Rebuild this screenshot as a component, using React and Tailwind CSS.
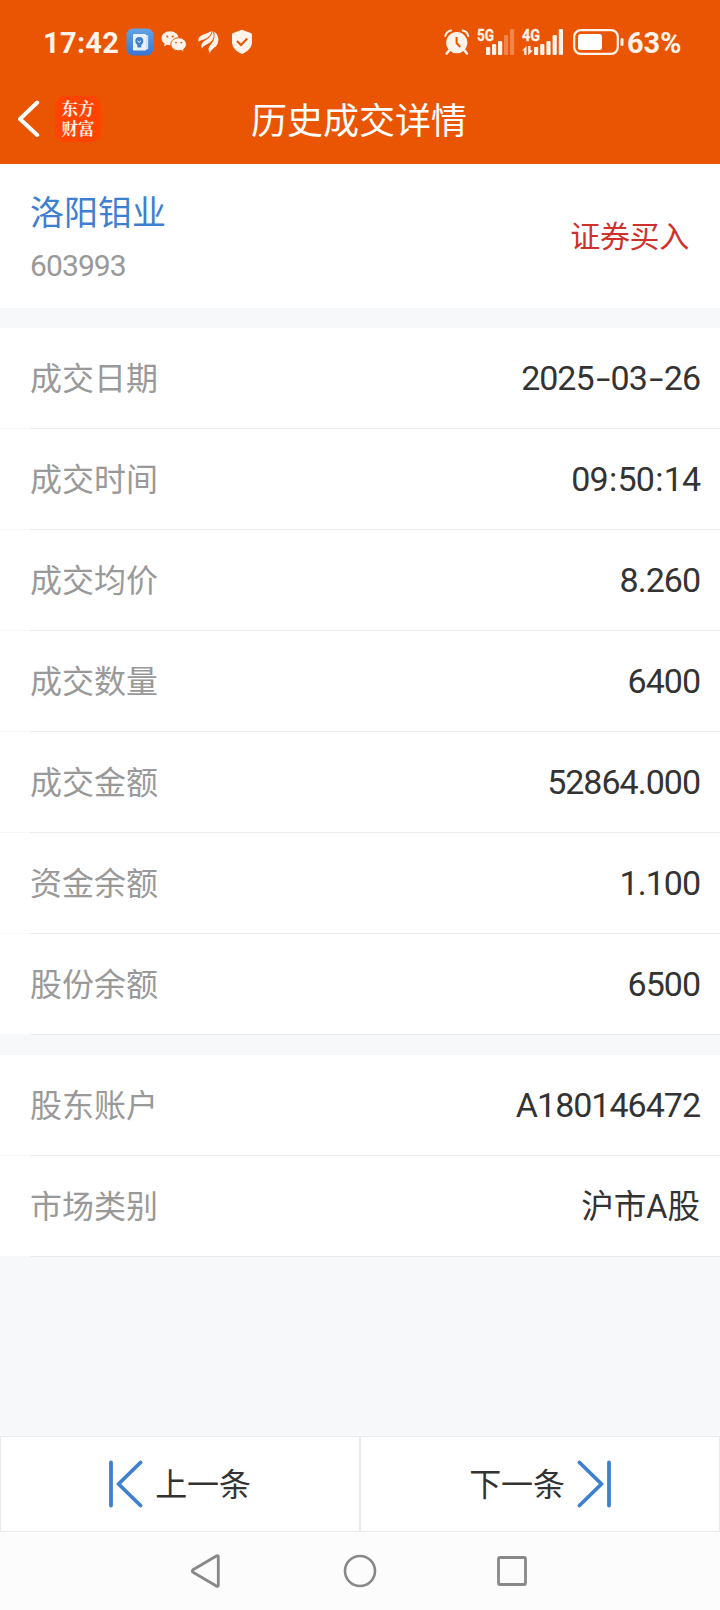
const tradeRows = [
  { label: "成交日期", value: "2025-03-26" },
  { label: "成交时间", value: "09:50:14" },
  { label: "成交均价", value: "8.260" },
  { label: "成交数量", value: "6400" },
  { label: "成交金额", value: "52864.000" },
  { label: "资金余额", value: "1.100" },
  { label: "股份余额", value: "6500" },
];

const accountRows = [
  { label: "股东账户", value: "A180146472" },
  { label: "市场类别", value: "沪市A股", cjk: true },
];

const NotesIcon = () => (
  <svg className="ml-[7px] w-7 h-7" viewBox="0 0 28 28">
    <defs>
      <linearGradient id="notes" x1="0" y1="0" x2="0" y2="1">
        <stop offset="0" stopColor="#5fa3e6" />
        <stop offset="1" stopColor="#3b74cf" />
      </linearGradient>
    </defs>
    <rect x="0.5" y="0.5" width="27" height="27" rx="6.5" fill="url(#notes)" />
    <rect x="19" y="7" width="3.2" height="14.5" rx="1.2" fill="#cfe2fa" />
    <rect x="7" y="6" width="13" height="16.5" rx="1.2" fill="#e6f1fd" />
    <circle cx="13.3" cy="13" r="4" fill="#3f7fd0" />
    <rect x="11.3" y="16" width="4" height="3.4" rx="0.6" fill="#3f7fd0" />
    <path d="M11.5 12.8l1.8 1.6 1.8-1.6" stroke="#fff" strokeWidth="1" fill="none" />
  </svg>
);

const WechatIcon = () => (
  <svg className="ml-[7px] w-[26px] h-6" viewBox="0 0 26 24">
    <path
      fill="#fff3ea"
      d="M9 1.2C4.3 1.2.6 4.3.6 8.2c0 2.2 1.2 4.1 3.1 5.400L3 16.200l3-1.500c1 .3 2 .5 3 .5 4.800 0 8.500-3.100 8.500-7S13.800 1.200 9 1.200z"
    />
    <path
      fill="#fff3ea"
      stroke="#ea5504"
      strokeWidth="1"
      d="M17.600 7.800c-4.300 0-7.800 2.900-7.800 6.500s3.500 6.500 7.800 6.500c.9 0 1.800-.1 2.600-.4l2.900 1.700-.6-2.800c1.800-1.200 2.900-3 2.900-5 0-3.600-3.500-6.500-7.800-6.500z"
    />
    <circle cx="6.3" cy="6.5" r="1.1" fill="#ea5504" />
    <circle cx="11.7" cy="6.5" r="1.1" fill="#ea5504" />
    <circle cx="15" cy="12.6" r="0.9" fill="#ea5504" />
    <circle cx="20.2" cy="12.6" r="0.9" fill="#ea5504" />
  </svg>
);

const FeatherIcon = () => (
  <svg className="ml-[11px] w-[21px] h-6" viewBox="0 0 21 24" fill="#fff3ea">
    <path d="M.5 11.800C-.8 5.500 5.500 4.800 9 3.200c2-.9 3.500-1.600 5-1.900C12.500 5.500 10 8 6.500 9.200 4 10 2 10.300.5 11.800z" />
    <path d="M3.800 18.500C1.500 11.500 8.500 10.800 11.500 7.200 13.200 5.200 14 3.500 14.800 1c2 5.500.5 9-3 11.500-3 2.200-6 2.800-8 6z" />
    <path d="M11.800 23.300C8.200 17.500 13.500 14.800 15.500 10.500 16.700 7.800 16.700 4.500 16.200 1.500c4.500 3.500 5.200 9 3 13-1.800 3.300-6 4.300-7.400 8.800z" />
  </svg>
);

const ShieldIcon = () => (
  <svg className="ml-3 w-[22px] h-[26px]" viewBox="0 0 22 26">
    <path
      fill="#fff3ea"
      d="M11 .8l8.700 3.100c.8.300 1.300 1 1.300 1.800V13c0 5.500-4 9.300-10 12C5 22.300 1 18.500 1 13V5.700c0-.8.5-1.500 1.300-1.800z"
    />
    <path d="M6 12l4 4 6.200-6.500" stroke="#ea5504" strokeWidth="2" fill="none" />
  </svg>
);

const AlarmIcon = () => (
  <svg className="w-[26px] h-[26px]" viewBox="0 0 26 26" fill="none" stroke="#fff3ea">
    <circle cx="12.8" cy="13.7" r="10.6" fill="#fff3ea" stroke="none" />
    <path d="M1.300 7C2 4 4 2 7 1.400M24.300 7c-.7-3-2.700-5-5.700-5.600" strokeWidth="2" strokeLinecap="round" />
    <path d="M5 21.500l-2.300 3M20.600 21.500l2.300 3" strokeWidth="2.6" strokeLinecap="round" />
    <path d="M12.600 8v6l3.600 4" stroke="#ea5504" strokeWidth="2" />
  </svg>
);

const SignalBars = ({ bars }) => (
  <g>
    {bars.map(([x, h, dim]) => (
      <rect key={x} x={x} y={31 - h} width="4.2" height={h} rx="1" fill="#fff3ea" opacity={dim ? 0.3 : 1} />
    ))}
  </g>
);

const NetworkLabel = ({ children, width }) => (
  <text
    x="0"
    y="17.2"
    textLength={width}
    lengthAdjust="spacingAndGlyphs"
    fontSize="17"
    fontWeight="700"
    fill="#fff3ea"
    stroke="#fff3ea"
    strokeWidth="0.3"
  >
    {children}
  </text>
);

const Signal5G = () => (
  <svg className="ml-[7px] w-[39px] h-9" viewBox="0 0 39 36">
    <NetworkLabel width="17">5G</NetworkLabel>
    <SignalBars bars={[[9, 8], [15, 11], [21, 14], [27, 20, true], [33, 26, true]]} />
  </svg>
);

const Signal4G = () => (
  <svg className="ml-[6px] w-[43px] h-9" viewBox="0 0 43 36">
    <NetworkLabel width="18">4G</NetworkLabel>
    <path d="M0 26.500l4.500-4.500v9H2.200v-4.500zM6.200 22h2.300v4.500h2.500L6.200 31z" fill="#fff3ea" />
    <SignalBars bars={[[12, 8], [18.2, 11], [24.4, 14], [30.6, 20], [36.8, 26]]} />
  </svg>
);

const BatteryIcon = () => (
  <svg className="ml-[8px] w-[51px] h-7" viewBox="0 0 51 28">
    <rect x="1.2" y="2.2" width="43.6" height="23.6" rx="6.5" fill="none" stroke="#fff3ea" strokeWidth="2.2" />
    <rect x="5" y="6" width="24" height="16" rx="2.5" fill="#fff" />
    <rect x="47.5" y="10" width="3" height="8" rx="1.5" fill="#fff3ea" />
  </svg>
);

const StatusBar = () => (
  <div className="flex justify-between items-center h-[84px] pl-[43px] pr-[37px] text-[#fff3ea] font-bold text-[29px]">
    <div className="flex items-center">
      <span className="w-[76px] pt-[3px] tracking-[0.3px] whitespace-nowrap">17:42</span>
      <NotesIcon />
      <WechatIcon />
      <FeatherIcon />
      <ShieldIcon />
    </div>
    <div className="flex items-center">
      <AlarmIcon />
      <Signal5G />
      <Signal4G />
      <BatteryIcon />
      <span className="ml-[3px] w-14 pt-[3px] tracking-[-0.2px] whitespace-nowrap">63%</span>
    </div>
  </div>
);

const TitleBar = () => (
  <div className="grid grid-cols-[1fr_auto_1fr] items-start h-20 pl-[18px] pr-5">
    <div className="flex items-center pt-3">
      <svg className="w-[22px] h-10" viewBox="0 0 22 40">
        <path d="M19.200 3.500L2 20l17.200 16" fill="none" stroke="#fff" strokeWidth="4" strokeLinecap="round" strokeLinejoin="round" />
      </svg>
      <div className="ml-[15px] w-[46px] h-[46px] pt-0.5 rounded-[10px] bg-[#ff4400] flex flex-col items-center justify-center font-['Liberation_Serif','Noto_Serif_CJK_SC','Noto_Sans_CJK_SC',serif] font-bold text-[16.5px] leading-[20px] text-[#fff3ea]">
        <span>东方</span>
        <span>财富</span>
      </div>
    </div>
    <h1 className="pt-3 text-[36px] leading-[52px] text-white">历史成交详情</h1>
    <div />
  </div>
);

const StockSummary = () => (
  <section className="flex justify-between items-center h-36 bg-white pl-[30px] pr-[31px]">
    <div className="pt-1.5">
      <div className="text-[34px] leading-[48px] text-[#3f7fd0]">洛阳钼业</div>
      <div className="mt-[5px] text-[30px] leading-[48px] tracking-[-0.9px] text-[#999]">603993</div>
    </div>
    <div className="text-[30px] tracking-[-0.3px] text-[#d0302c]">证券买入</div>
  </section>
);

// Hyphens and colons take a wider cell than the font gives them
const Value = ({ value, cjk }) => {
  if (cjk) {
    return <span className="pt-0.5 text-[32.5px] text-[#333]">{value}</span>;
  }
  return (
    <span className="text-[34px] tracking-[-1px] text-[#333]">
      {value.split(/([-:])/).map((part, i) => {
        if (part === "-") {
          return <span key={i} className="inline-block w-[17px] text-center scale-x-150">-</span>;
        }
        if (part === ":") {
          return <span key={i} className="inline-block w-[10px] text-center">:</span>;
        }
        return part;
      })}
    </span>
  );
};

const RowGroup = ({ rows }) => (
  <section className="bg-white">
    {rows.map((row) => (
      <div key={row.label}>
        <div className="flex justify-between items-center h-[100px] pl-[30px] pr-5">
          <span className="pt-0.5 text-[32px] text-[#999]">{row.label}</span>
          <Value value={row.value} cjk={row.cjk} />
        </div>
        <div className="h-px bg-[#f6f8fa] pl-[30px]">
          <div className="h-px bg-[#ebebeb]" />
        </div>
      </div>
    ))}
  </section>
);

const Pager = () => (
  <div className="grid grid-cols-2 h-24 bg-white text-[32px] text-[#333]">
    <button className="flex items-center justify-center border border-[#ebebeb]">
      <svg className="w-[34px] h-12" viewBox="0 0 34 48" fill="none" stroke="#3f7fd0" strokeWidth="3.8" strokeLinecap="round" strokeLinejoin="round">
        <path d="M2 2.500v43M31.500 2.500L9.500 24l22 21.500" />
      </svg>
      <span className="ml-3 pt-0.5 tracking-[-0.2px]">上一条</span>
    </button>
    <button className="flex items-center justify-center border border-[#ebebeb]">
      <span className="mr-3 pt-0.5 tracking-[-0.2px]">下一条</span>
      <svg className="w-[34px] h-12" viewBox="0 0 34 48" fill="none" stroke="#3f7fd0" strokeWidth="3.8" strokeLinecap="round" strokeLinejoin="round">
        <path d="M32 2.500v43M2.500 2.500l22 21.500-22 21.500" />
      </svg>
    </button>
  </div>
);

const SystemNav = () => (
  <div className="flex justify-center gap-[119px] h-[78px] pt-[21px] bg-[#fcfcfc]">
    <svg className="w-9 h-9" viewBox="0 0 36 36" fill="none" stroke="#888" strokeWidth="2.8" strokeLinejoin="round">
      <path d="M31.300 3.500v29a1 1 0 0 1-1.500.8L6 19.200a1.400 1.400 0 0 1 0-2.400L29.800 2.700a1 1 0 0 1 1.500.8z" />
    </svg>
    <svg className="w-9 h-9" viewBox="0 0 36 36" fill="none" stroke="#888" strokeWidth="2.6">
      <circle cx="18" cy="18" r="15" />
    </svg>
    <svg className="w-9 h-9" viewBox="0 0 36 36" fill="none" stroke="#888" strokeWidth="2.8">
      <rect x="1.5" y="4.5" width="27" height="27" rx="1.5" />
    </svg>
  </div>
);

const App = () => {
  return (
    <div className="flex flex-col w-[720px] h-[1610px] bg-[#f6f8fa] font-[Roboto,'Noto_Sans_CJK_SC',sans-serif]">
      <header className="h-[164px] bg-[#ea5504]">
        <StatusBar />
        <TitleBar />
      </header>
      <StockSummary />
      <main className="flex-1 flex flex-col gap-5 pt-5">
        <RowGroup rows={tradeRows} />
        <RowGroup rows={accountRows} />
      </main>
      <Pager />
      <SystemNav />
    </div>
  );
};

export default App;
